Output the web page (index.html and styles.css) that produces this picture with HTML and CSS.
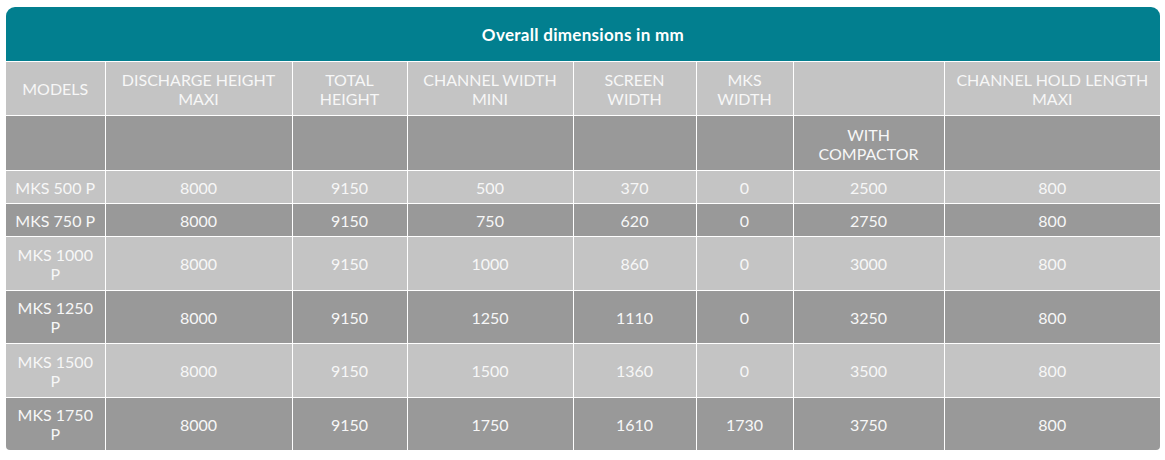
FILE: index.html
```html
<!DOCTYPE html>
<html>
<head>
<meta charset="utf-8">
<link rel="stylesheet" href="styles.css">
</head>
<body>
<div class="wrap">
  <div class="title">Overall dimensions in mm</div>
  <table class="dims">
    <colgroup>
      <col class="c1"><col class="c2"><col class="c3"><col class="c4"><col class="c5"><col class="c6"><col class="c7"><col class="c8">
    </colgroup>
    <tr class="light h1">
      <td>MODELS</td><td>DISCHARGE HEIGHT<br>MAXI</td><td>TOTAL<br>HEIGHT</td><td>CHANNEL WIDTH<br>MINI</td><td>SCREEN<br>WIDTH</td><td>MKS<br>WIDTH</td><td></td><td>CHANNEL HOLD LENGTH<br>MAXI</td>
    </tr>
    <tr class="dark h2">
      <td></td><td></td><td></td><td></td><td></td><td></td><td>WITH<br>COMPACTOR</td><td></td>
    </tr>
    <tr class="light short">
      <td>MKS 500 P</td><td>8000</td><td>9150</td><td>500</td><td>370</td><td>0</td><td>2500</td><td>800</td>
    </tr>
    <tr class="dark short">
      <td>MKS 750 P</td><td>8000</td><td>9150</td><td>750</td><td>620</td><td>0</td><td>2750</td><td>800</td>
    </tr>
    <tr class="light tall">
      <td>MKS 1000<br>P</td><td>8000</td><td>9150</td><td>1000</td><td>860</td><td>0</td><td>3000</td><td>800</td>
    </tr>
    <tr class="dark tall">
      <td>MKS 1250<br>P</td><td>8000</td><td>9150</td><td>1250</td><td>1110</td><td>0</td><td>3250</td><td>800</td>
    </tr>
    <tr class="light tall">
      <td>MKS 1500<br>P</td><td>8000</td><td>9150</td><td>1500</td><td>1360</td><td>0</td><td>3500</td><td>800</td>
    </tr>
    <tr class="dark tall">
      <td>MKS 1750<br>P</td><td>8000</td><td>9150</td><td>1750</td><td>1610</td><td>1730</td><td>3750</td><td>800</td>
    </tr>
  </table>
</div>
</body>
</html>
```

FILE: styles.css
```css
html, body {
  margin: 0;
  padding: 0;
  background: #ffffff;
}
body {
  padding: 7px 5px 0 6px;
  font-family: Lato, "Open Sans", sans-serif;
}
.wrap {
  width: 1154px;
  border-radius: 9px 9px 4px 4px;
  overflow: hidden;
}
.title {
  height: 55px;
  background: #027f8f;
  color: #ffffff;
  font-weight: 700;
  font-size: 17px;
  letter-spacing: 0.3px;
  display: flex;
  align-items: center;
  justify-content: center;
  border-bottom: 1px solid #ffffff;
  box-sizing: border-box;
}
.dims {
  width: 1154px;
  border-collapse: collapse;
  table-layout: fixed;
}
.c1 { width: 99px; }
.c2 { width: 187px; }
.c3 { width: 115px; }
.c4 { width: 166px; }
.c5 { width: 123px; }
.c6 { width: 97px; }
.c7 { width: 151px; }
.c8 { width: 216px; }
.dims td {
  border: 1px solid #ffffff;
  text-align: center;
  vertical-align: middle;
  color: #f7f7f7;
  font-size: 16px;
  line-height: 19px;
  padding: 0 3px;
}
.dims tr:first-child td { border-top: none; }
.dims tr:last-child td { border-bottom: none; }
.dims td:first-child { border-left: none; }
.dims td:last-child { border-right: none; }
.light td { background: #c4c4c4; }
.dark td { background: #999999; }
.h1 td { height: 53px; }
.h2 td { height: 52px; padding-top: 2px; }
.short td { height: 32px; }
.light.tall td { height: 53px; }
.dark.tall td { height: 52px; }
```
